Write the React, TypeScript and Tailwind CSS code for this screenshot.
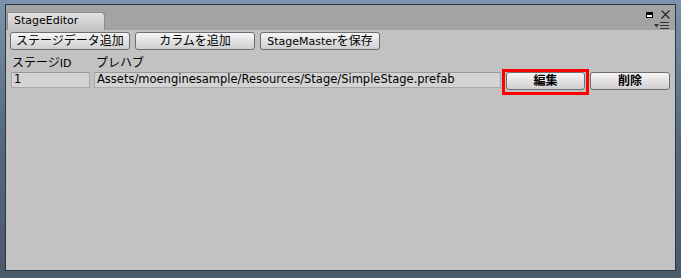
import React from "react"

const font = { fontFamily: '"DejaVu Sans", "Noto Sans CJK JP", sans-serif' }

function Jp({ children }: { children: React.ReactNode }) {
  return <span className="text-[12px]">{children}</span>
}

function Btn({ children, className = "" }: { children: React.ReactNode; className?: string }) {
  return (
    <div
      className={`flex items-center justify-center rounded-[3px] border border-[#6e6e6e] bg-gradient-to-b from-[#f6f6f6] to-[#cfcfcf] text-[11px] leading-none text-black ${className}`}
    >
      {children}
    </div>
  )
}

export default function App() {
  return (
    <div
      className="flex h-[278px] w-[681px] flex-col bg-gradient-to-b from-[#7d93ad] via-[#56687a] to-[#4a5a6a] pt-[4px] pr-[5px] pb-[7px] pl-[5px]"
      style={font}
    >
      <div className="flex flex-1 flex-col border border-[#2c3640] bg-[#c2c2c2]">
        {/* tab strip */}
        <div className="relative flex h-[25px] items-end bg-[#a3a3a3] pl-[1px]">
          <div className="flex h-[18px] w-[98px] items-center rounded-tr-[4px] border-t border-r border-l border-[#8c8c8c] bg-gradient-to-b from-[#e2e2e2] to-[#c4c4c4] pl-[6px] text-[11px] text-black">
            StageEditor
          </div>
          <div className="absolute top-[5px] right-[5px] flex items-center gap-[8px]">
            <div className="h-[6px] w-[7px] border border-black border-t-[3px] bg-white" />
            <svg width="9" height="9" viewBox="0 0 9 9">
              <path d="M0.5 0.5 L8.5 8.5 M8.5 0.5 L0.5 8.5" stroke="#222" strokeWidth="1.1" />
            </svg>
          </div>
          <div className="absolute top-[17px] right-[6px] flex items-center gap-[1px]">
            <svg width="5" height="4" viewBox="0 0 5 4">
              <path d="M0 0 L5 0 L2.5 3.5 Z" fill="#333" />
            </svg>
            <svg width="9" height="7" viewBox="0 0 9 7">
              <path d="M0 0.5 H9 M0 3.5 H9 M0 6.5 H9" stroke="#333" strokeWidth="1" />
            </svg>
          </div>
        </div>

        {/* toolbar */}
        <div className="flex gap-[5px] pt-[2px] pl-[4px]">
          <Btn className="h-[18px] w-[120px]"><Jp>ステージデータ追加</Jp></Btn>
          <Btn className="h-[18px] w-[120px]"><Jp>カラムを追加</Jp></Btn>
          <Btn className="h-[18px] w-[120px]">StageMaster<Jp>を保存</Jp></Btn>
        </div>

        {/* labels */}
        <div className="mt-[5px] flex h-[14px] items-center pt-[1px] pl-[6px] text-[11px] leading-none text-black">
          <div className="w-[84px]"><Jp>ステージ</Jp>ID</div>
          <div><Jp>プレハブ</Jp></div>
        </div>

        {/* row */}
        <div className="flex items-start pl-[5px]">
          <div className="mt-[3px] flex h-[16px] w-[79px] items-center border border-[#a9a9a9] border-t-[#9a9a9a] bg-[#d3d3d3] pl-[2px] text-[11.5px] text-black">
            1
          </div>
          <div className="mt-[3px] ml-[4px] flex h-[16px] w-[407px] items-center border border-[#a9a9a9] border-t-[#9a9a9a] bg-[#d3d3d3] pl-[2px] text-[11.5px] text-black">
            Assets/moenginesample/Resources/Stage/SimpleStage.prefab
          </div>
          <div className="ml-[1px] border-[3px] border-[#ff0000] px-[1px] pb-[2px]">
            <Btn className="h-[18px] w-[79px] font-bold"><Jp>編集</Jp></Btn>
          </div>
          <Btn className="mt-[3px] ml-[1px] h-[18px] w-[80px] font-bold"><Jp>削除</Jp></Btn>
        </div>
      </div>
    </div>
  )
}
